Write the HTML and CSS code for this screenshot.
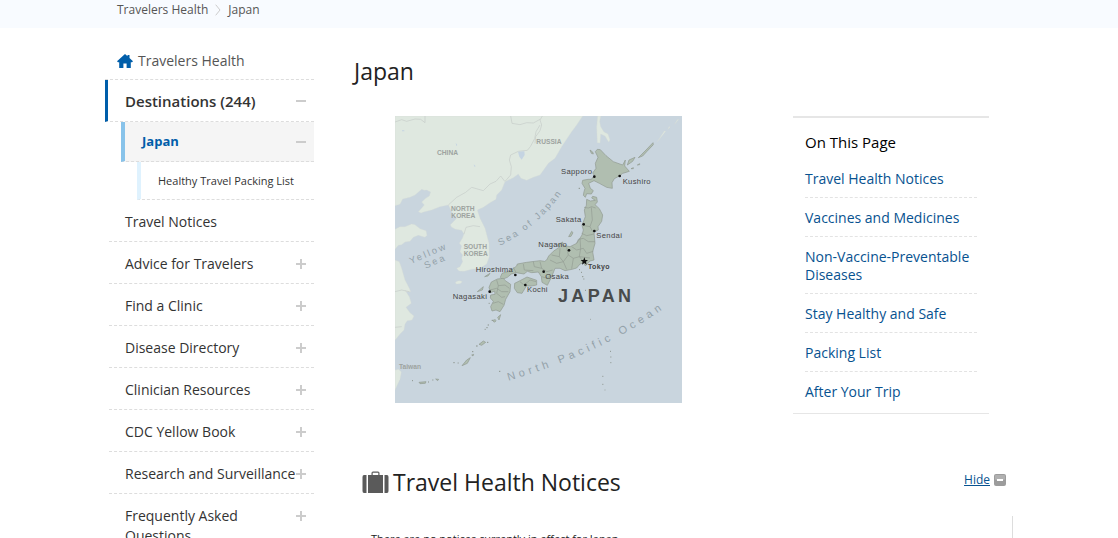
FILE: index.html
```html
<!DOCTYPE html>
<html lang="en">
<head>
<meta charset="utf-8">
<meta name="viewport" content="width=device-width, initial-scale=1">
<title>Japan - Travelers Health</title>
<link rel="stylesheet" href="styles.css">
</head>
<body>
<nav class="crumbs" aria-label="Breadcrumb">
  <div class="wrap crumbs-list">
    <a href="#">Travelers Health</a>
    <svg class="crumb-sep" viewBox="0 0 6 12" aria-hidden="true"><path d="M.7 .7 5 6 .7 11.300"/></svg>
    <a href="#">Japan</a>
  </div>
</nav>
<div class="wrap page">
  <nav class="side" aria-label="Section">
    <a class="side-home" href="#">
      <svg class="home-icon" viewBox="0 0 16 14" aria-hidden="true"><path d="M8 0 10.500 2.200V1h2v3L16 7.300 15 8.200H13.800V14H9.600V9.600H6.400V14H2.200V8.200H1L0 7.300Z"/></svg>
      <span>Travelers Health</span>
    </a>
    <ul class="side-list">
      <li class="item item-open"><a href="#">Destinations (244)</a><button class="toggle minus" type="button" aria-label="Collapse Destinations"></button></li>
      <li class="item item-current"><a href="#">Japan</a><button class="toggle minus" type="button" aria-label="Collapse Japan"></button></li>
      <li class="item item-leaf"><a href="#">Healthy Travel Packing List</a></li>
      <li class="item"><a href="#">Travel Notices</a></li>
      <li class="item"><a href="#">Advice for Travelers</a><button class="toggle" type="button" aria-label="Expand Advice for Travelers"></button></li>
      <li class="item"><a href="#">Find a Clinic</a><button class="toggle" type="button" aria-label="Expand Find a Clinic"></button></li>
      <li class="item"><a href="#">Disease Directory</a><button class="toggle" type="button" aria-label="Expand Disease Directory"></button></li>
      <li class="item"><a href="#">Clinician Resources</a><button class="toggle" type="button" aria-label="Expand Clinician Resources"></button></li>
      <li class="item"><a href="#">CDC Yellow Book</a><button class="toggle" type="button" aria-label="Expand CDC Yellow Book"></button></li>
      <li class="item"><a href="#">Research and Surveillance</a><button class="toggle" type="button" aria-label="Expand Research and Surveillance"></button></li>
      <li class="item"><a href="#">Frequently Asked Questions</a><button class="toggle" type="button" aria-label="Expand Frequently Asked Questions"></button></li>
    </ul>
  </nav>
  <main class="main">
    <h1>Japan</h1>
    <div class="intro">
      <div class="map-cell">
        <svg class="map" viewBox="15 18 861 861" role="img" aria-label="Map of Japan">
          <rect class="sea" x="15" y="18" width="861" height="861"/>
          <g class="land">
            <path d="M15 18V287L30 283 38 267 60 262 75 255 95 238 103 241 110 240 122 246 118 258 107 265 95 276 103 285 96 293 85 305 93 309 104 305 125 300 150 290 175 285 183 300 190 315 200 325 190 335 181 344 184 351 195 357 205 359 215 361 222 372 217 385 208 400 215 408 210 425 218 435 215 445 218 455 210 470 200 475 207 483 222 484 245 478 270 475 290 462 298 440 297 400 285 355 270 325 262 300 280 292 300 278 318 268 320 255 335 240 345 215 370 203 385 192 393 205 410 211 430 202 450 195 475 160 495 145 515 110 545 65 560 45 578 18Z"/>
            <path d="M15 358 30 350 45 350 65 342 75 344 90 356 108 362 111 376 105 382 85 376 70 382 60 394 45 396 35 404 25 406 15 418Z"/>
            <path d="M15 450 28 455 35 475 45 510 58 535 62 545 50 545 45 540 58 560 64 580 48 592 60 608 72 618 66 630 52 632 45 642 42 660 30 672 20 685 15 690Z"/>
            <path d="M15 780 26 778 34 786 30 808 15 840Z"/>
            <path d="M196 517q10-9 21-2-6 9-18 7Z"/>
            <path d="M623 18 620 50 622 98 630 99 632 72 645 78 656 96 660 90 654 72 642 66 632 50 629 35 632 18Z"/>
            <path d="M802 95 827 64 823 63ZM834 58 841 50 837 50ZM854 43 866 28 862 29Z"/>
          </g>
          <g class="frontier">
            <path d="M15 36 35 29 50 34 75 27 92 28 105 38V18M362 18 366 40 390 44 410 38 430 39 450 28M450 45 438 65 434 86 421 110 412 121 385 124 362 135 358 150 364 170 362 195 346 213M345 215 332 198 318 214 300 222 280 242 245 232 227 247 200 262 175 285M222 372 228 352 250 347 270 350"/>
            <path d="M435 100 437 80 450 62 455 45 450 30 457 18M15 545 35 540 58 545M15 652 35 650"/>
          </g>
          <path class="lake" d="M384 125 403 124 404 135 395 149 388 140ZM197 98l5 7-3 3ZM36 61h7v3h-7ZM251 163l6 6-4 1Z"/>
          <g class="japan">
            <path d="M622 118 631 119 648 137 670 155 698 165 706 150 704 168 718 184 705 188 698 190 688 198 673 206 666 218 667 235 650 232 628 220 612 212 596 220 601 235 610 242 604 252 590 251 586 262 580 256 582 245 585 235 576 220 578 211 594 208 604 208 613 196 608 189 618 175 616 160 624 142 616 125Z"/>
            <path d="M600 120 608 126 610 132 604 130ZM712 165 717 150 735 142 728 154ZM745 143 768 120 789 98 790 104 770 125 758 138ZM723 176l7-3v3ZM742 165l7-4v3Z"/>
            <path d="M590 268 601 273 616 271 605 264 608 259 620 262 622 276 615 284 628 296 638 315 635 334 624 350 625 360 612 366 615 400 608 425 612 450 600 453 586 468 582 458 570 462 560 474 546 478 525 482 510 475 495 475 485 500 472 526 456 517 454 500 445 486 425 488 412 484 402 492 378 488 364 492 352 502 337 508 331 502 336 490 360 483 380 468 382 462 410 457 450 452 464 454 470 450 476 438 490 424 510 410 500 406 518 396 518 406 540 410 560 400 576 375 580 360 576 346 586 320 583 300 589 286Z"/>
            <path d="M536 380 545 364 549 368 543 379Z"/>
            <path d="M304 516 322 507 340 505 346 512 362 523 360 545 347 568 342 586 330 605 318 600 306 603 302 590 310 574 301 564 302 555 315 553 314 543 302 548 297 532Z"/>
            <path d="M374 520 392 511 411 501 440 511 440 525 424 528 409 528 396 550 382 548 373 535Z"/>
            <path d="M267 703 280 693 287 697 275 706ZM216 767 230 750 241 743 232 760ZM87 817 108 815 106 820 90 821ZM323 622 332 614 327 630ZM310 630a4 4 0 1 0 6-1ZM262 545 280 530 277 540ZM284 500 300 490 294 498ZM137 807l9 1-3 4ZM245 735l6-2-2 5Z"/>
          </g>
          <path class="prefecture" d="M582 292 595 294 605 290 617 294M604 292 607 330 600 350 608 365M583 347 600 350M575 370 590 377 612 372M560 400 565 388 580 385 595 395 615 395M545 410 560 420 580 415 590 430 610 424M570 385 572 415 568 440 585 460M530 412 535 435 550 445 568 440 600 444M510 415 508 440 520 455 535 435M485 435 508 440M480 450 500 460 520 455 530 478M550 445 545 476M450 455 455 475 470 485 488 480M430 455 433 470 455 475M400 462 403 480 430 482M370 472 378 488M455 500 472 505 482 495M320 510 325 527 345 525 358 535M300 540 320 535 335 545 355 545M325 527 320 550 335 562 345 560M308 580 325 575 340 583M390 515 402 525 420 510 438 515"/>
          <path class="islets" d="M296 580h3M293 645h4M289 653h4M305 631h4M284 658h3M291 697h4M258 708h5M246 725h4M190 758h4M203 759h3M66 812h3M127 810h3M114 816h3M327 784h4M567 479h3M573 487h3M576 500h4M580 507h3M600 628h2M585 541h3M660 724h3M661 741h3M661 758h3M637 799h3M637 823h3M644 840h2M566 235h4"/>
          <g class="dot">
            <circle cx="613" cy="200" r="4"/><circle cx="689" cy="198" r="4"/><circle cx="581" cy="343" r="4"/><circle cx="613" cy="363" r="4"/><circle cx="537" cy="421" r="4"/><circle cx="461" cy="485" r="4"/><circle cx="376" cy="495" r="4"/><circle cx="406" cy="525" r="4"/><circle cx="299" cy="545" r="4"/>
            <path d="M583 442 586 450 594 450 588 455 590 464 583 459 576 464 578 455 572 450 580 450Z"/>
          </g>
          <g class="country">
            <text x="141" y="134">CHINA</text><text x="439" y="103">RUSSIA</text>
            <text x="183" y="303">NORTH</text><text x="184" y="323">KOREA</text>
            <text x="221" y="416">SOUTH</text><text x="221" y="437">KOREA</text>
            <text x="27" y="776">Taiwan</text>
          </g>
          <g class="city">
            <text x="513" y="192">Sapporo</text><text x="698" y="223">Kushiro</text>
            <text x="497" y="335">Sakata</text><text x="619" y="385">Sendai</text>
            <text x="445" y="412">Nagano</text><text x="257" y="486">Hiroshima</text>
            <text x="188" y="567">Nagasaki</text><text x="411" y="546">Kochi</text>
            <text x="466" y="506">Osaka</text><text class="capital" x="594" y="477">Tokyo</text>
          </g>
          <text class="title" x="504" y="577">JAPAN</text>
          <path id="sea-line" class="guide" d="M330 407Q450 350 535 222L560 180"/>
          <path id="ocean-line" class="guide" d="M355 812Q640 730 835 585L880 550"/>
          <g class="water">
            <text><textPath href="#sea-line">Sea of Japan</textPath></text>
            <text transform="translate(63 462) rotate(-23)">Yellow</text>
            <text transform="translate(107 476) rotate(-23)">Sea</text>
            <text class="ocean"><textPath href="#ocean-line">North Pacific Ocean</textPath></text>
          </g>
        </svg>
      </div>
      <aside class="toc">
        <h2>On This Page</h2>
        <ul>
          <li><a href="#notices">Travel Health Notices</a></li>
          <li><a href="#">Vaccines and Medicines</a></li>
          <li><a href="#">Non-Vaccine-Preventable Diseases</a></li>
          <li><a href="#">Stay Healthy and Safe</a></li>
          <li><a href="#">Packing List</a></li>
          <li><a href="#">After Your Trip</a></li>
        </ul>
      </aside>
    </div>
    <section class="notices" id="notices">
      <header class="notices-head">
        <svg class="case-icon" viewBox="0 0 27 23" aria-hidden="true"><path d="M2 4H4.500V22H2Q.5 22 .5 20V6Q.5 4 2 4ZM22.500 4H25q1.500 0 1.500 2V20q0 2-1.500 2H22.500ZM6 4H9.500V2Q9.500 .5 11 .5H16Q17.500 .5 17.500 2V4H21V22H6ZM10.700 4H16.300V1.700H10.700Z" fill-rule="evenodd"/></svg>
        <h2>Travel Health Notices</h2>
        <a class="hide" href="#notices"><span>Hide</span><svg viewBox="0 0 12 12" aria-hidden="true"><rect width="12" height="12" rx="2" fill="#9c9c9c"/><rect x="1" y="1" width="10" height="5" rx="1" fill="#b0b0b0"/><path d="M3 5h6v2H3z" fill="#fff"/></svg></a>
      </header>
      <div class="notices-body"><p>There are no notices currently in effect for Japan.</p></div>
    </section>
  </main>
</div>
</body>
</html>
```
FILE: styles.css
```css
* { box-sizing: border-box; }
body {
  margin: 0;
  background: #fff;
  color: #222;
  font: 14px/20px "Open Sans", "Noto Sans", sans-serif;
}
a { color: inherit; text-decoration: none; }
ul { list-style: none; margin: 0; padding: 0; }
h1, h2, p { margin: 0; }
.wrap { max-width: 908px; margin: 0 auto; }

.crumbs { background: #f8fbff; color: #555; font-size: 12px; line-height: 18px; }
.crumbs-list { display: flex; align-items: center; gap: 7px; padding: 1px 12px 9px; }
.crumb-sep { width: 6px; height: 12px; fill: none; stroke: #ccc; }

.page { display: flex; gap: 40px; align-items: flex-start; padding-top: 22px; }
.side { flex: 0 0 209px; color: #333; }
.side-home { display: flex; align-items: center; gap: 5px; padding: 1px 12px 8px; color: #555; }
.home-icon { width: 16px; height: 14px; fill: #005eaa; }
.side-list { border-top: 1px dashed #ddd; }
.item { display: flex; align-items: flex-start; margin-left: 4px; padding: 12px 7px 9px 16px; border-bottom: 1px dashed #ddd; }
.item a { flex: 1; margin-right: -4px; }
.item-open { margin-left: 0; padding: 11px 7px 10px 17px; border-left: 3px solid #005eaa; font-size: 15px; font-weight: 600; }
.item-current { margin-left: 16px; padding: 10px 7px 9px 17px; border-left: 4px solid #88c3ea; background: #f5f5f5; color: #005eaa; font-size: 13px; line-height: 19px; font-weight: 700; }
.item-leaf { margin-left: 32px; padding: 9px 7px 9px 17px; border-left: 4px solid #dff2fe; font-size: 11px; line-height: 19px; }
.toggle {
  flex: none;
  width: 12px;
  height: 20px;
  padding: 0;
  border: 0;
  background:
    linear-gradient(#ccc, #ccc) center / 10px 2px no-repeat,
    linear-gradient(#ccc, #ccc) center / 2px 10px no-repeat;
}
.toggle.minus { background: linear-gradient(#ccc, #ccc) center / 10px 2px no-repeat; }

.main { flex: 1; min-width: 0; }
h1 { font-size: 23px; line-height: 32px; font-weight: 500; padding-top: 5px; }
.intro { display: flex; align-items: flex-start; padding: 29px 24px 0 0; }
.map-cell { flex: 1; padding-left: 41px; }
.map { display: block; width: 287px; height: 287px; }
.toc { flex: 0 0 196px; padding: 14px 12px 0; border-top: 2px solid #e6e6e6; border-bottom: 1px solid #e6e6e6; color: #000; }
.toc h2 { font-size: 15px; line-height: 20px; font-weight: 400; }
.toc ul { padding: 7px 0 3px; }
.toc li { padding: 11px 0 9px; border-bottom: 1px dashed #e3e3e3; line-height: 18px; }
.toc li:last-child { border-bottom: 0; }
.toc a { color: #075290; }

.notices { padding-top: 53px; }
.notices-head { display: flex; align-items: center; gap: 4px; padding: 0 7px 0 8px; }
.notices-head h2 { flex: 1; font-size: 23px; line-height: 30px; font-weight: 500; }
.case-icon { width: 27px; height: 23px; fill: #5a5a5a; }
.hide { display: flex; align-items: center; gap: 4px; padding-bottom: 4px; color: #075290; font-size: 12px; }
.hide span { text-decoration: underline; }
.hide svg { width: 12px; height: 12px; }
.notices-body { margin-top: 19px; padding: 13px 17px 16px; border-right: 1px solid #ddd; font-size: 11px; }

.sea { fill: #c9d5de; }
.land { fill: #dfe8e0; stroke: #d3dcd5; }
.frontier { fill: none; stroke: #c6cbc8; stroke-width: 2; }
.lake { fill: #c5d4e2; }
.japan { fill: #b0beb0; stroke: #8f998f; stroke-width: 2; stroke-linejoin: round; }
.prefecture { fill: none; stroke: #929c92; stroke-width: 2; }
.islets { stroke: #8b938c; stroke-width: 3; }
.dot { fill: #111; }
.guide { fill: none; stroke: none; }
.map text { font-family: "Liberation Sans", Arial, sans-serif; }
.country { fill: #9da39f; font-size: 20px; font-weight: 700; }
.city { fill: #444; font-size: 23px; letter-spacing: 1px; }
.city .capital { font-weight: 700; font-size: 21px; }
.title { fill: #484b4c; font-size: 54px; font-weight: 700; letter-spacing: 10px; }
.water { fill: #93a1a9; font-size: 28px; letter-spacing: 7px; }
.water .ocean { font-size: 33px; letter-spacing: 12px; }
```
